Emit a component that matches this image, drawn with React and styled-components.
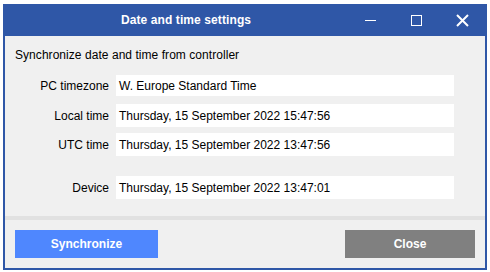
import styled, { createGlobalStyle } from "styled-components";

const Global = createGlobalStyle`
  html, body {
    margin: 0;
    padding: 0;
    background: #ffffff;
  }
  body {
    font-family: "Liberation Sans", Arial, sans-serif;
  }
`;

const Window = styled.div`
  margin: 4px 0 0 3px;
  width: 484px;
  height: 266px;
  box-sizing: border-box;
  border: 2px solid #2f57a7;
  border-top: none;
  background: #f0f0f0;
  display: flex;
  flex-direction: column;
`;

const TitleBar = styled.div`
  height: 32px;
  margin: 0 -2px;
  background: #2f57a7;
  display: flex;
  align-items: center;
  color: #ffffff;
`;

const Title = styled.div`
  flex: 1;
  text-align: center;
  padding-left: 22px;
  font-size: 12px;
  font-weight: bold;
  letter-spacing: 0.1px;
`;

const Controls = styled.div`
  display: flex;
  align-items: center;
  padding-right: 2px;
`;

const ControlButton = styled.div`
  width: 46px;
  height: 32px;
  display: flex;
  align-items: center;
  justify-content: center;
`;

const Body = styled.div`
  flex: 1;
  padding: 12px 10px 0 10px;
`;

const Intro = styled.div`
  font-size: 12px;
  line-height: 14px;
  letter-spacing: 0.05px;
  color: #000;
`;

const Row = styled.div`
  display: grid;
  grid-template-columns: 94px 338px;
  column-gap: 7px;
  align-items: center;
  margin-top: ${({ $gap }) => $gap}px;
`;

const Label = styled.div`
  text-align: right;
  font-size: 12px;
  color: #000;
`;

const Field = styled.div`
  height: ${({ $h }) => $h}px;
  background: #ffffff;
  display: flex;
  align-items: center;
  padding-left: 3px;
  font-size: 12px;
  color: #000;
`;

const Footer = styled.div`
  border-top: 4px solid #e1e1e1;
  height: 48px;
  padding: 0 10px;
  display: flex;
  align-items: center;
  justify-content: space-between;
`;

const Button = styled.div`
  width: ${({ $w }) => $w}px;
  height: 28px;
  background: ${({ $bg }) => $bg};
  color: #ffffff;
  font-size: 12px;
  font-weight: bold;
  display: flex;
  align-items: center;
  justify-content: center;
`;

const rows = [
  { label: "PC timezone", value: "W. Europe Standard Time", gap: 13, h: 21 },
  { label: "Local time", value: "Thursday, 15 September 2022 15:47:56", gap: 8, h: 23 },
  { label: "UTC time", value: "Thursday, 15 September 2022 13:47:56", gap: 6, h: 23 },
  { label: "Device", value: "Thursday, 15 September 2022 13:47:01", gap: 20, h: 23 },
];

export default function App() {
  return (
    <>
      <Global />
      <Window>
        <TitleBar>
          <Title>Date and time settings</Title>
          <Controls>
            <ControlButton>
              <svg width="11" height="11" viewBox="0 0 11 11">
                <line x1="0" y1="5.5" x2="11" y2="5.5" stroke="#fff" strokeWidth="1" />
              </svg>
            </ControlButton>
            <ControlButton>
              <svg width="11" height="11" viewBox="0 0 11 11">
                <rect x="0.5" y="0.5" width="10" height="10" fill="none" stroke="#fff" strokeWidth="1" />
              </svg>
            </ControlButton>
            <ControlButton>
              <svg width="13" height="13" viewBox="0 0 13 13">
                <path d="M1 1L12 12M12 1L1 12" stroke="#fff" strokeWidth="2" />
              </svg>
            </ControlButton>
          </Controls>
        </TitleBar>
        <Body>
          <Intro>Synchronize date and time from controller</Intro>
          {rows.map((r) => (
            <Row key={r.label} $gap={r.gap}>
              <Label>{r.label}</Label>
              <Field $h={r.h}>{r.value}</Field>
            </Row>
          ))}
        </Body>
        <Footer>
          <Button $w={143} $bg="#4f87fe">Synchronize</Button>
          <Button $w={130} $bg="#808080">Close</Button>
        </Footer>
      </Window>
    </>
  );
}
